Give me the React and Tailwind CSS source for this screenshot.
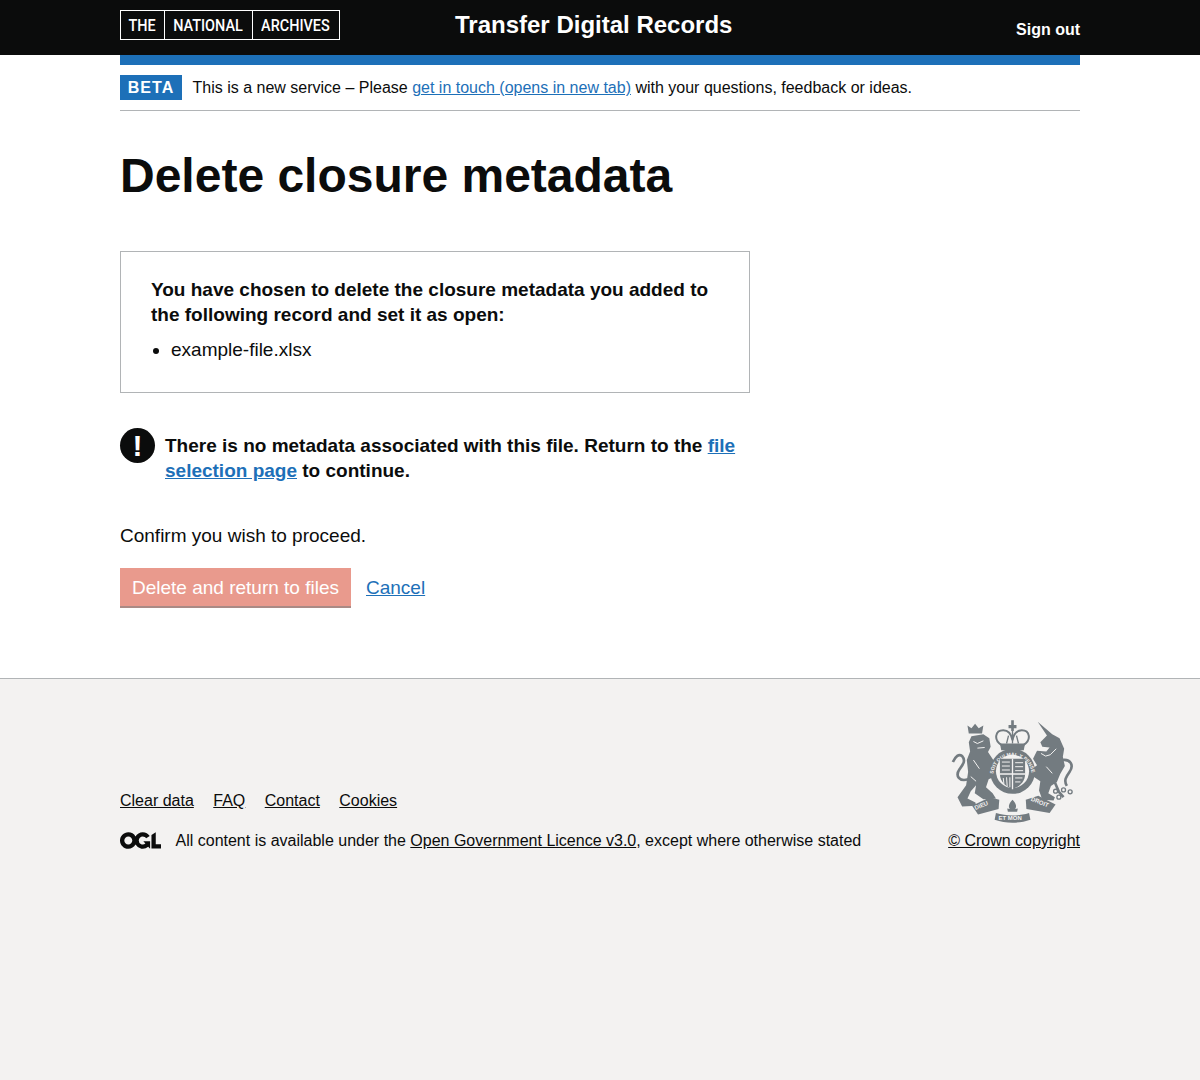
const sans = "font-['Liberation_Sans',Arial,sans-serif]";

function OglLogo() {
  return (
    <svg viewBox="0 0 483.2 195.7" width="41" height="17" className="shrink-0 -mt-px text-[#0b0c0c]">
      <path fill="currentColor" d="M421.5 142.8V.1l-50.7 32.3v161.1h112.4v-50.7zm-122.3-9.6A47.12 47.12 0 0 1 221 97.8c0-26 21.1-47.1 47.1-47.1 16.7 0 31.4 8.7 39.7 21.8l42.7-27.2A97.63 97.63 0 0 0 268.1 0c-36.5 0-68.3 20.1-85.1 49.7A98 98 0 0 0 97.8 0C43.9 0 0 43.9 0 97.8s43.9 97.8 97.8 97.8c36.5 0 68.3-20.1 85.1-49.7a97.76 97.76 0 0 0 149.6 25.4l19.4 22.2h3v-87.8h-80l24.3 27.5zM97.8 145c-26 0-47.1-21.1-47.1-47.1s21.1-47.1 47.1-47.1 47.2 21 47.2 47S123.8 145 97.8 145" />
    </svg>
  );
}

// royal coat of arms, traced roughly by hand
function Crest() {
  const c = "#737b80";
  const bg = "#f3f2f1";
  return (
    <svg viewBox="30 20 385 320" width="128" height="106" className="shrink-0 mr-[2px]">
      {/* lion */}
      <path fill={c} d="M86 96 L94 78 L130 72 L148 84 L152 110 L144 126 L160 150 L172 172 L168 198 L146 208 L138 232 L158 250 L168 266 L130 268 L104 250 L108 226 L92 244 L82 266 L106 278 L108 288 L66 290 L52 262 L78 226 L84 186 L80 150 L90 124 Z" />
      <path fill="none" stroke={c} strokeWidth="8" d="M84 208 C58 216 44 198 58 178 C68 164 78 152 66 138 C56 130 46 138 38 156" />
      <path fill={c} d="M86 70 L82 46 L94 54 L105 40 L116 54 L130 46 L126 70 Z" />
      <path fill="none" stroke={bg} strokeWidth="3" d="M100 94 L112 100 L130 92 M112 114 L134 112 M100 150 L118 176 M92 200 L108 214" />
      {/* unicorn */}
      <path fill={c} d="M294 34 L338 72 L360 84 L374 116 L370 140 L376 168 L362 192 L352 216 L334 228 L326 250 L346 262 L342 272 L308 270 L298 242 L302 214 L284 202 L268 184 L292 166 L280 146 L292 122 L320 124 L330 112 L308 110 L302 96 L322 76 Z" />
      <path fill="none" stroke={c} strokeWidth="8" d="M368 150 C394 146 404 166 390 186 C380 200 372 212 382 228 M346 218 L358 246 L372 262" />
      <circle cx="348" cy="244" r="6" fill="none" stroke={c} strokeWidth="4" />
      <circle cx="372" cy="240" r="6" fill="none" stroke={c} strokeWidth="4" />
      <circle cx="392" cy="246" r="6" fill="none" stroke={c} strokeWidth="4" />
      <circle cx="358" cy="262" r="6" fill="none" stroke={c} strokeWidth="4" />
      <path fill="none" stroke={bg} strokeWidth="3" d="M304 130 L318 138 L332 134 L350 116 M320 170 L338 190" />
      {/* crown */}
      <path fill={c} d="M214 54 L206 54 L206 44 L214 44 L214 30 L222 30 L222 44 L230 44 L230 54 L222 54 L222 62 L214 62 Z" />
      <path fill="none" stroke={c} strokeWidth="6" d="M184 104 C160 88 166 60 190 60 C204 60 214 70 218 90 C222 70 232 60 246 60 C270 60 276 88 252 104" />
      <path fill="none" stroke={c} strokeWidth="4" d="M200 100 L206 76 M236 100 L230 76 M218 62 V100" />
      <path fill={c} d="M180 100 H256 L252 120 H184 Z" />
      {/* garter and shield */}
      <circle cx="218" cy="184" r="68" fill={c} />
      <circle cx="218" cy="184" r="50" fill={bg} />
      <path id="garter" fill="none" d="M160 196 A58 58 0 0 1 276 196" />
      <text fontFamily="Liberation Sans, Arial, sans-serif" fontSize="15" fill={bg} fontWeight="700">
        <textPath href="#garter" startOffset="4">SOIT QUI MAL Y PENSE</textPath>
      </text>
      <path fill={c} d="M180 146 H256 V192 C256 216 238 230 218 238 C198 230 180 216 180 192 Z" />
      <path fill={bg} d="M216 146 H220 V238 H216 Z M180 190 H256 V194 H180 Z" />
      <path fill="none" stroke={bg} strokeWidth="3" d="M186 156 H210 M186 168 H210 M186 180 H210 M226 158 H250 M226 170 H250 M226 182 H250 M190 204 L192 222 M200 202 L202 230 M210 202 V232 M226 204 H248 M226 216 H242" />
      {/* motto */}
      <path fill={c} d="M96 288 L150 262 L178 270 L176 298 L114 314 Z" />
      <path fill={c} d="M258 270 L296 258 L348 284 L330 310 L260 298 Z" />
      <path fill={c} d="M168 310 C200 320 236 320 268 310 L272 330 C238 342 198 342 164 330 Z" />
      <path fill={c} d="M218 270 C228 280 232 290 226 298 L234 296 L232 306 L204 306 L202 296 L210 298 C204 290 208 280 218 270 Z" />
      <g fontFamily="Liberation Sans, Arial, sans-serif" fontSize="18" fill={bg} fontWeight="700">
        <text x="106" y="301" transform="rotate(-22 106 301)">DIEU</text>
        <text x="272" y="272" transform="rotate(22 272 272)">DROIT</text>
        <text x="176" y="331">ET MON</text>
      </g>
    </svg>
  );
}

export default function App() {
  return (
    <div className={`${sans} flex flex-col min-h-[1080px] bg-white text-[#0b0c0c]`}>
      {/* HEADER */}
      <header className="h-[55px] bg-[#0b0c0c] text-white">
        <div className="w-[960px] mx-auto flex items-start justify-between">
          <div className="mt-[10px] w-[220px] h-[30px] flex border border-white text-[17px] leading-[29px] font-['Roboto',sans-serif] font-medium">
            <span className="w-[44px] border-r border-white flex justify-center"><span className="inline-block scale-x-[0.85]">THE</span></span>
            <span className="w-[88px] pr-[1px] border-r border-white flex justify-center"><span className="inline-block scale-x-[0.85]">NATIONAL</span></span>
            <span className="flex-1 pr-[2px] flex justify-center"><span className="inline-block scale-x-[0.85]">ARCHIVES</span></span>
          </div>
          <div className="mt-[10px] ml-[115px] text-[24px] leading-[30px] font-bold">Transfer Digital Records</div>
          <a href="#" className="mt-[20px] ml-auto text-[16px] leading-[20px] font-bold">Sign out</a>
        </div>
      </header>

      <main className="w-[960px] mx-auto">
        <div className="h-[10px] bg-[#1d70b8]"></div>

        {/* BETA BANNER */}
        <div className="h-[46px] flex items-start gap-[10.5px] pt-[10px] border-b border-[#b1b4b6]">
          <span className="w-[62px] h-[25px] bg-[#1d70b8] text-white text-[16px] leading-[25px] font-bold tracking-[1px] text-center">BETA</span>
          <p className="text-[16px] leading-[25px]">
            This is a new service – Please <a href="#" className="text-[#1d70b8] underline">get in touch (opens in new tab)</a> with your questions, feedback or ideas.
          </p>
        </div>

        <h1 className="mt-[40px] text-[48px] leading-[50px] font-bold">Delete closure metadata</h1>

        {/* PANEL */}
        <div className="mt-[50px] w-[630px] h-[142px] border border-[#b1b4b6] pt-[25px] px-[30px]">
          <p className="text-[19px] leading-[25px] font-bold">You have chosen to delete the closure metadata you added to the following record and set it as open:</p>
          <ul className="mt-[10px] pl-[20px] list-disc text-[19px] leading-[25px]">
            <li>example-file.xlsx</li>
          </ul>
        </div>

        {/* WARNING */}
        <div className="mt-[35px] w-[630px] flex gap-[10px]">
          <div className="w-[35px] h-[35px] rounded-full bg-[#0b0c0c] text-white text-[30px] leading-[35px] font-bold text-center shrink-0">!</div>
          <p className="mt-[5px] text-[19px] leading-[25px] font-bold">
            There is no metadata associated with this file. Return to the <a href="#" className="text-[#1d70b8] underline">file selection page</a> to continue.
          </p>
        </div>

        <p className="mt-[40px] text-[19px] leading-[25px]">Confirm you wish to proceed.</p>

        {/* ACTIONS */}
        <div className="mt-[20px] h-[40px] flex items-start gap-[15px] mb-[70px]">
          <button className="w-[231px] h-[38px] pt-[1px] bg-[#e99a8d] text-white text-[19px] leading-[37px] shadow-[0_2px_0_#aa8a85] text-center">Delete and return to files</button>
          <a href="#" className="text-[#1d70b8] text-[19px] leading-[40px] underline">Cancel</a>
        </div>
      </main>

      {/* FOOTER */}
      <footer className="flex-1 bg-[#f3f2f1] border-t border-[#b1b4b6]">
        <div className="w-[960px] mx-auto flex items-start justify-between pt-[38px]">
          <div className="pt-[71px]">
            <div className="flex gap-[19.45px] text-[16px] leading-[25px]">
              <a href="#" className="underline">Clear data</a>
              <a href="#" className="underline">FAQ</a>
              <a href="#" className="underline">Contact</a>
              <a href="#" className="underline">Cookies</a>
            </div>
            <div className="mt-[15px] flex items-center gap-[14.5px] text-[16px] leading-[25px]">
              <OglLogo />
              <span>All content is available under the <a href="#" className="underline">Open Government Licence v3.0</a>, except where otherwise stated</span>
            </div>
          </div>
          <div className="flex flex-col items-end">
            <Crest />
            <a href="#" className="mt-[5px] text-[16px] leading-[25px] underline">© Crown copyright</a>
          </div>
        </div>
      </footer>
    </div>
  );
}
